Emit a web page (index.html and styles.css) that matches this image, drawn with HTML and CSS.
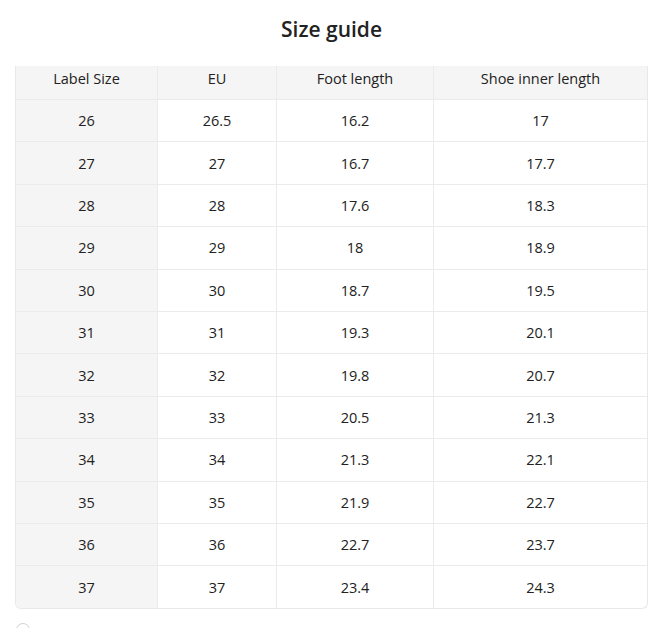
FILE: index.html
```html
<!DOCTYPE html>
<html>
<head>
<meta charset="utf-8">
<link rel="stylesheet" href="styles.css">
</head>
<body>
<div class="page">
  <h1 class="title">Size guide</h1>
  <div class="table">
    <div class="row head">
      <div class="cell">Label Size</div>
      <div class="cell">EU</div>
      <div class="cell">Foot length</div>
      <div class="cell">Shoe inner length</div>
    </div>
    <div class="row"><div class="cell">26</div><div class="cell">26.5</div><div class="cell">16.2</div><div class="cell">17</div></div>
    <div class="row"><div class="cell">27</div><div class="cell">27</div><div class="cell">16.7</div><div class="cell">17.7</div></div>
    <div class="row"><div class="cell">28</div><div class="cell">28</div><div class="cell">17.6</div><div class="cell">18.3</div></div>
    <div class="row"><div class="cell">29</div><div class="cell">29</div><div class="cell">18</div><div class="cell">18.9</div></div>
    <div class="row"><div class="cell">30</div><div class="cell">30</div><div class="cell">18.7</div><div class="cell">19.5</div></div>
    <div class="row"><div class="cell">31</div><div class="cell">31</div><div class="cell">19.3</div><div class="cell">20.1</div></div>
    <div class="row"><div class="cell">32</div><div class="cell">32</div><div class="cell">19.8</div><div class="cell">20.7</div></div>
    <div class="row"><div class="cell">33</div><div class="cell">33</div><div class="cell">20.5</div><div class="cell">21.3</div></div>
    <div class="row"><div class="cell">34</div><div class="cell">34</div><div class="cell">21.3</div><div class="cell">22.1</div></div>
    <div class="row"><div class="cell">35</div><div class="cell">35</div><div class="cell">21.9</div><div class="cell">22.7</div></div>
    <div class="row"><div class="cell">36</div><div class="cell">36</div><div class="cell">22.7</div><div class="cell">23.7</div></div>
    <div class="row last"><div class="cell">37</div><div class="cell">37</div><div class="cell">23.4</div><div class="cell">24.3</div></div>
  </div>
  <div class="radio"></div>
</div>
</body>
</html>
```
FILE: styles.css
```css
* { box-sizing: border-box; }
html, body { margin: 0; padding: 0; background: #fff; }
body {
  font-family: "Open Sans", "Noto Sans", sans-serif;
  color: #222;
  overflow: hidden;
  height: 628px;
}
.page {
  padding: 14px 0 0 15px;
  width: 652px;
}
.title {
  margin: 0 0 22px 0;
  width: 633px;
  height: 30px;
  line-height: 30px;
  font-size: 21px;
  font-weight: 600;
  text-align: center;
  color: #222;
}
.table {
  width: 633px;
  border: 1px solid #e8e8e8;
  border-top: none;
  border-radius: 0 0 6px 6px;
  overflow: hidden;
}
.row {
  display: grid;
  grid-template-columns: 142px 119px 157px 213px;
  height: 42.4px;
  border-bottom: 1px solid #ebebeb;
}
.row.last { border-bottom: none; height: 41.8px; }
.row.head {
  height: 34px;
  background: #f5f5f5;
}
.cell {
  display: flex;
  align-items: center;
  justify-content: center;
  font-size: 14.5px;
  border-right: 1px solid #ebebeb;
}
.cell:last-child { border-right: none; }
.row .cell:first-child { background: #f5f5f5; }
.row.head .cell { padding-bottom: 9px; }
.radio {
  margin-top: 14px;
  margin-left: 1px;
  width: 14px;
  height: 14px;
  border: 1px solid #d0d0d0;
  border-radius: 50%;
}
```
